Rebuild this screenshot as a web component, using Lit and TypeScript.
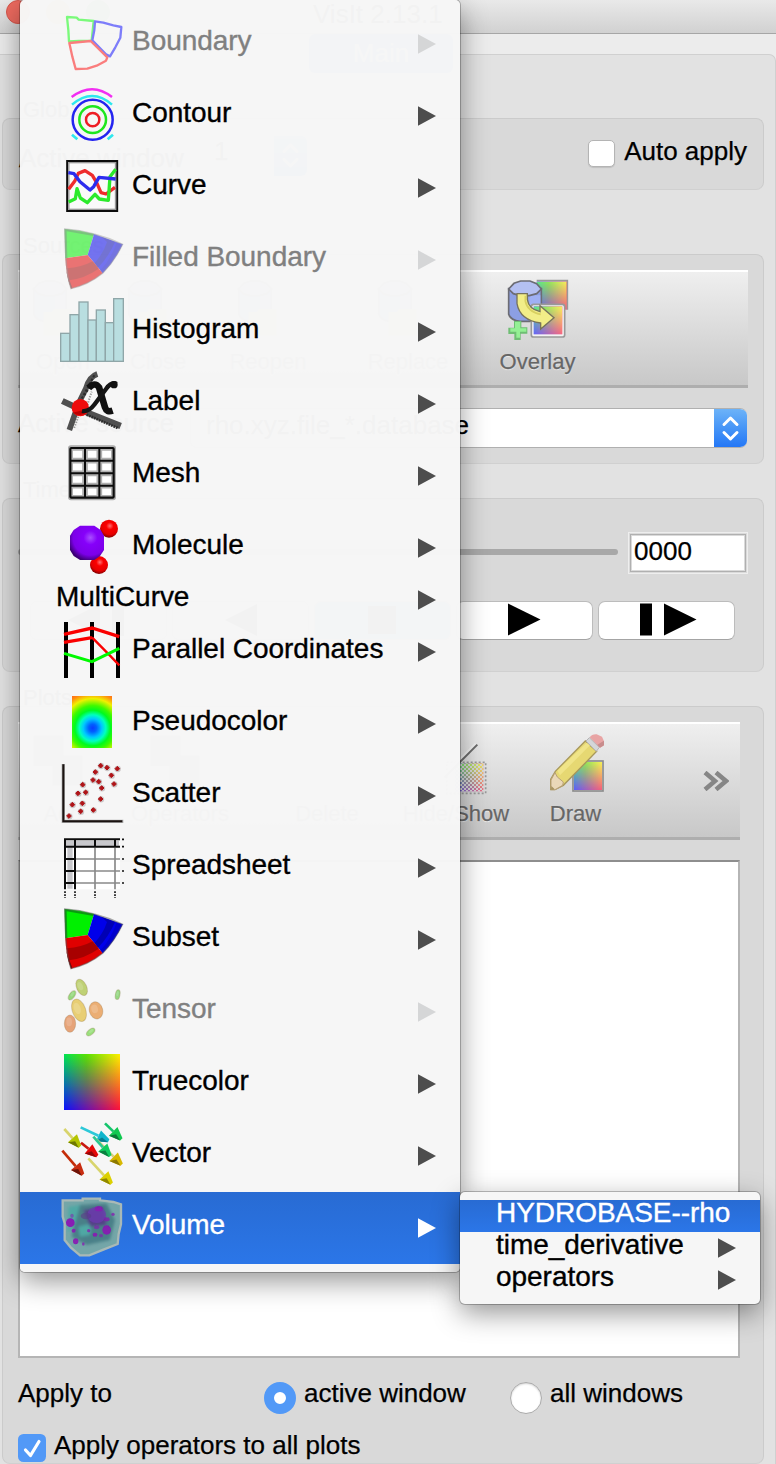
import { LitElement, html, svg, css } from "lit";
import { customElement } from "lit/decorators.js";
import { classMap } from "lit/directives/class-map.js";

/* ---------- shared icon parts ---------- */

const fourColor = (id: string, x: number, y: number, w: number, h: number) => svg`
  <defs>
    <linearGradient id=${id + "t"}><stop offset="0" stop-color="#00e650"/><stop offset=".4" stop-color="#58e400"/><stop offset="1" stop-color="#fff200"/></linearGradient>
    <linearGradient id=${id + "b"}><stop offset="0" stop-color="#0a10ff"/><stop offset="1" stop-color="#ff1038"/></linearGradient>
    <linearGradient id=${id + "v"} x1="0" y1="0" x2="0" y2="1"><stop offset="0" stop-color="#fff"/><stop offset="1" stop-color="#000"/></linearGradient>
    <mask id=${id + "m"}><rect x=${x} y=${y} width=${w} height=${h} fill="url(#${id}v)"/></mask>
  </defs>
  <rect x=${x} y=${y} width=${w} height=${h} fill="url(#${id}b)"/>
  <rect x=${x} y=${y} width=${w} height=${h} fill="url(#${id}t)" mask="url(#${id}m)"/>`;

const wedges = svg`
  <path d="M194 27L240 32L282 42L263 105L196 115Z" fill="#00f000"/>
  <path d="M194 27L282 42L280 48L200 34L202 114L196 115Z" fill="#0a9a10"/>
  <path d="M282 42L368 73Q345 122 308 160L263 105Z" fill="#0000ea"/>
  <path d="M305 51L345 66Q325 112 294 143L283 130Q310 100 321 66Z" fill="#0000b4"/>
  <path d="M350 68L368 73Q345 122 308 160L301 151Q332 118 350 68Z" fill="#0000cc"/>
  <path d="M196 115L263 105L308 160Q265 195 213 206Q198 165 196 115Z" fill="#e00000"/>
  <path d="M200 145Q245 142 278 124L296 146Q255 175 207 181Z" fill="#a80000"/>
  <path d="M198 150L208 180L217 204L213 206Q203 180 198 150Z" fill="#700000"/>
  <path d="M194 27Q240 30 282 42Q326 53 368 73Q345 122 308 160Q265 195 213 206Q196 160 194 27Z" fill="none" stroke="#555" stroke-opacity=".5" stroke-width="4"/>`;

const arrow = (x1: number, y1: number, x2: number, y2: number, shaft: string, head: string, dark: string) => {
  const l = Math.hypot(x2 - x1, y2 - y1);
  const ux = (x2 - x1) / l, uy = (y2 - y1) / l;
  const bx = x2 - ux * 34, by = y2 - uy * 34;
  return svg`<path d="M${x1} ${y1}L${bx} ${by}" stroke=${shaft} stroke-width="8"/>
    <path d="M${x2 + uy * 5} ${y2 - ux * 5}L${x2 - uy * 5} ${y2 + ux * 5}L${bx - uy * 18} ${by + ux * 18}L${bx + uy * 18} ${by - ux * 18}Z" fill=${head}/>
    <path d="M${x2 - uy * 5} ${y2 + ux * 5}L${bx - uy * 18} ${by + ux * 18}L${bx + ux * 12} ${by + uy * 12}Z" fill=${dark}/>`;
};

const scatterDots = [[302,257],[321,263],[352,266],[286,276],[334,286],[279,300],[296,305],[342,312],[305,324],[248,314],[257,337],[234,340],[302,357],[217,374],[247,370],[242,394],[280,390],[207,408]];

const bars = [[182,28,340],[210,27,284],[237,27,246],[264,25,300],[289,27,270],[316,25,308],[341,29,236]];

const ellipses: [number, number, number, number, number, string][] = [
  [245,262,15,26,-25,"#bfd175"],[216,286,8,16,35,"#96d87c"],[237,331,20,35,-20,"#e8ce74"],
  [288,331,20,26,-15,"#ebae74"],[210,371,17,26,0,"#e6a378"],[272,396,8,15,50,"#9adf7c"],[353,284,7,15,10,"#96d884"]];

const purple = [[290,315,28,24,0.8],[258,318,16,10,0.6],[211,338,13,13,0.95],[320,360,13,14,0.9],[221,362,6,6,0.8],[227,394,8,9,0.9],[285,374,7,6,0.9],[339,313,5,5,0.7],[266,362,5,5,0.7],[296,296,12,8,0.8],[320,328,9,6,0.7],[303,377,6,5,0.6],[250,402,4,5,0.7],[290,352,8,6,0.6],[216,317,5,6,0.5]];

const icons: Record<string, [number, unknown]> = {
  Boundary: [36, svg`<g fill="none" stroke-width="7" stroke-linejoin="round">
    <path d="M201 51L230 53L236 59L281 63L275 122L236 123L207 124L205 90Z" stroke="#7bfa7b"/>
    <path d="M285 64L310 68L340 76L364 81L361 113L346 142L330 169L318 163L277 121L283 90Z" stroke="#7d7dfa"/>
    <path d="M208 129L240 126L272 123L322 172L318 182L290 197L262 206L227 207L217 170Z" stroke="#fa7d7d"/></g>`],
  Contour: [252, svg`<g fill="none" stroke-width="7.5">
    <circle cx="278" cy="359" r="20" stroke="#ee1c24"/><circle cx="278" cy="359" r="40" stroke="#1ee61e"/><circle cx="278" cy="359" r="60" stroke="#2424f0"/>
    <path d="M216 314Q277 262 336 314" stroke="#2ee8ee"/><path d="M215 291Q277 244 336 291" stroke="#f22ef2"/>
    <path d="M216 404L232 418M339 404L323 418" stroke="#2ee8ee" stroke-width="8"/></g>`],
  Curve: [468, svg`<rect x="201.500" y="483" width="150" height="150" fill="#fafafa" stroke="#0c0c0c" stroke-width="6"/>
    <rect x="206.500" y="488" width="140" height="140" fill="none" stroke="#999" stroke-width="4"/>
    <g fill="none" stroke-width="10" stroke-linejoin="round">
    <path d="M206 568L225 542L235 520L255 512L277 526L290 548L303 578L318 582L345 562" stroke="#ee2c2c"/>
    <path d="M206 606L226 596L231 566L241 594L262 608L285 583L298 597L325 601L330 530L347 508" stroke="#2cea2c"/>
    <path d="M205 518L222 521L240 545L270 570L281 560L297 532L347 537" stroke="#2c2cee"/></g>`],
  "Filled Boundary": [24, svg`<g opacity=".53">${wedges}</g>`],
  Subset: [24, wedges],
  Histogram: [240, svg`<g fill="#b9dee0" stroke="#8fa6a8" stroke-width="4">${bars.map(b => svg`<rect x=${b[0]} y=${b[2]} width=${b[1]} height=${424 - b[2]}/>`)}</g>`],
  Label: [456, svg`<g fill="none">
    <path d="M292 462Q268 470 258 505L236 550L208 630" stroke="#505050" stroke-width="17"/>
    <path d="M283 466L232 560M270 500L250 530" stroke="#2c2c2c" stroke-width="6" stroke-dasharray="7 5"/>
    <path d="M187 543L262 578L362 618" stroke="#505050" stroke-width="19"/>
    <path d="M260 584L355 625" stroke="#2c2c2c" stroke-width="8" stroke-dasharray="5 3"/>
    <path d="M235 590L222 625M262 555L275 515" stroke="#999" stroke-width="6" stroke-dasharray="4 4"/>
    <circle cx="241" cy="563" r="26" fill="#ee0c0c"/><path d="M218 578Q242 594 266 574L250 570Z" fill="#b00"/>
    <path d="M266 504Q284 484 297 502L315 562Q320 578 338 572" stroke="#111" stroke-width="20"/>
    <path d="M350 492Q334 484 318 507L284 553Q266 577 246 573" stroke="#151515" stroke-width="13"/>
    <circle cx="342" cy="494" r="11" fill="#111"/></g>`],
  Mesh: [42, svg`<rect x="209" y="51" width="134" height="155" rx="4" fill="#fff" stroke="#aaa" stroke-width="10"/>
    <path d="M255 55V204M298 55V204M212 92H340M212 130H340M212 167H340" stroke="#b0b0b0" stroke-width="17"/>
    <rect x="212" y="55" width="128" height="147" rx="3" fill="none" stroke="#b0b0b0" stroke-width="14"/>
    <path d="M255 55V204M298 55V204M212 92H340M212 130H340M212 167H340" stroke="#0c0c0c" stroke-width="6"/>
    <rect x="211" y="54" width="130" height="149" rx="3" fill="none" stroke="#0c0c0c" stroke-width="6.500"/>`],
  Molecule: [258, svg`<defs><radialGradient id="mp" cx=".6" cy=".35" r=".68"><stop offset="0" stop-color="#a850ff"/><stop offset=".3" stop-color="#8600fa"/><stop offset=".75" stop-color="#7c00e8"/><stop offset="1" stop-color="#3c0074"/></radialGradient>
    <radialGradient id="mr" cx=".55" cy=".35" r=".68"><stop offset="0" stop-color="#ff7070"/><stop offset=".3" stop-color="#fa0000"/><stop offset=".7" stop-color="#e60000"/><stop offset="1" stop-color="#700000"/></radialGradient></defs>
    <circle cx="327" cy="296" r="27" fill="url(#mr)"/><circle cx="297" cy="405" r="27" fill="url(#mr)"/>
    <path d="M240 287H283L302 300L312 317V360L300 378L283 390H240L221 378L210 360V317L221 300Z" fill="url(#mp)"/>`],
  "Parallel Coordinates": [570, svg`<g fill="none" stroke="#000" stroke-width="12"><path d="M198 576V744M276 576V744M354 576V744"/>
    <path d="M192 613L276 594L358 620M192 637L276 623" stroke="#fa0000" stroke-width="10"/><path d="M276 622L330 677L358 706" stroke="#fa0000" stroke-width="7"/>
    <path d="M192 670L276 695L358 655" stroke="#00fa00" stroke-width="9"/></g>`],
  Pseudocolor: [36, svg`<defs><radialGradient id="pc" gradientUnits="userSpaceOnUse" cx="278" cy="144" r="116"><stop offset="0" stop-color="#0a3cff"/><stop offset=".1" stop-color="#0060ff"/><stop offset=".24" stop-color="#00c8ff"/><stop offset=".34" stop-color="#00ffc0"/><stop offset=".46" stop-color="#00fa20"/><stop offset=".58" stop-color="#40fa00"/><stop offset=".76" stop-color="#f0f000"/><stop offset=".9" stop-color="#ff8c10"/><stop offset="1" stop-color="#ff6420"/></radialGradient></defs>
    <rect x="216" y="48" width="120" height="156" fill="url(#pc)"/>`],
  Scatter: [252, svg`<path d="M190 252V424H370" fill="none" stroke="#aaa" stroke-width="10"/><path d="M190 253V424H367" fill="none" stroke="#1a1210" stroke-width="6"/>
    ${scatterDots.map(d => svg`<circle cx=${d[0] + 1} cy=${d[1] + 1} r="9.5" fill="#b0a8a8" opacity=".6"/><path d="M${d[0]} ${d[1] - 7}L${d[0] + 7} ${d[1]}L${d[0]} ${d[1] + 7}L${d[0] - 7} ${d[1]}Z" fill="#b01418" stroke="#b01418" stroke-width="3"/>`)}`],
  Spreadsheet: [468, svg`<rect x="195" y="478" width="165" height="150" fill="#fff"/><path d="M198 490H357M210 500V626" stroke="#c8c8cc" stroke-width="16"/>
    <path d="M285 503V628M345 503V628M228 537H360M228 573H360M228 609H360" stroke="#8a8a8a" stroke-width="5"/>
    <path d="M192 478H360M192 500H360M195 476V628M225 476V628M285 478V500M345 478V500M195 537H225M195 573H225M195 609H225" stroke="#0c0c0c" stroke-width="6"/>
    <path d="M366 478H372M366 500H372M366 537H372M366 573H372M366 609H372" stroke="#111" stroke-width="5"/>
    <path d="M195 634V654M225 634V654M285 634V654M345 634V654" stroke="#111" stroke-width="5" stroke-dasharray="5 4"/>`],
  Tensor: [240, svg`${ellipses.map(e => svg`<g transform="rotate(${e[4]} ${e[0]} ${e[1]})"><ellipse cx=${e[0]} cy=${e[1]} rx=${e[2]} ry=${e[3]} fill=${e[5]} stroke="#806030" stroke-opacity=".25" stroke-width="3"/><ellipse cx=${e[0] - e[2] * 0.15} cy=${e[1] - e[3] * 0.2} rx=${e[2] * 0.5} ry=${e[3] * 0.5} fill="#fff" opacity=".16"/></g>`)}`],
  Truecolor: [456, fourColor("tc", 192, 462, 168, 168)],
  Vector: [42, svg`${arrow(193,57,240,110,"#d8d46c","#b4c400","#6e7800")}${arrow(242,52,326,92,"#2cc8d8","#10b4cc","#087c90")}${arrow(315,40,364,88,"#14c46c","#10c850","#0a7838")}${arrow(289,88,365,164,"#d8d080","#d8b800","#8c7800")}${arrow(280,80,331,138,"#2cc890","#10cc60","#0a8040")}${arrow(243,98,292,138,"#c81810","#e40808","#900808")}${arrow(187,122,249,194,"#c42c08","#c82c10","#6c1408")}${arrow(265,145,335,221,"#d8d46c","#dcd000","#908800")}`],
  Volume: [258, svg`<defs><filter id="vb" x="-20%" y="-20%" width="140%" height="140%"><feGaussianBlur stdDeviation="5"/></filter><filter id="vs" x="-20%" y="-20%" width="140%" height="140%"><feGaussianBlur stdDeviation="1.8"/></filter></defs>
    <path d="M188 271L248 271V266H300V271L340 276L363 283L363 342L356 372L353 402L312 418L268 436H240L212 412L194 390V340L188 320Z" fill="#74a6a8" stroke="#a9b9b6" stroke-width="7"/>
    <g filter="url(#vb)"><path d="M235 285L320 280L345 330L330 390L260 405L215 380L225 330Z" fill="#4a8088"/><path d="M205 290L240 285L225 340L204 370ZM235 350L275 340L270 375L240 380Z" fill="#4fa8a4"/><path d="M250 300L310 290L320 345L270 350Z" fill="#544088"/></g>
    <g filter="url(#vs)">${purple.map((p, i) => svg`<ellipse cx=${p[0]} cy=${p[1]} rx=${p[2]} ry=${p[3]} opacity=${p[4]} fill=${i === 0 ? "#6a3cae" : i === 1 ? "#5a3a88" : "#8a14b4"}/>`)}</g>`],
};

const cylinder = svg`<path d="M206 145V222Q212 240 240 243H270Q300 238 304 222V145Z" fill="#8c9fe4" stroke="#6c6c74" stroke-width="5"/>
  <path d="M268 165H301V222Q292 240 268 240Z" fill="#9fb0f4"/>
  <path d="M206 146L222 129L242 122H270L290 130L304 146L290 160L268 166H240L220 160Z" fill="#b4c0f2" stroke="#6c6c74" stroke-width="5"/>`;

const overlayIcon = svg`<g><path d="M290 121H382V208" fill="none" stroke="#999" stroke-width="5"/>
  <g opacity=".62">${fourColor("ov1", 290, 124, 90, 84)}</g>
  ${cylinder}
  <rect x="274" y="192" width="100" height="98" rx="7" fill="#f3f3f3" stroke="#999" stroke-width="5"/>
  <g opacity=".62">${fourColor("ov2", 281, 198, 86, 84)}</g>
  <path d="M231 160H262V178Q266 206 300 214V196L342 232L302 266V248Q240 240 231 190Z" fill="#f2ee88" stroke="#77735c" stroke-width="4"/>
  <path d="M256 166V182Q262 214 302 222" fill="none" stroke="#d8d060" stroke-width="5"/>
  <path d="M222 242H244V261H262V280H242V299H223V281H205V262H222Z" fill="#6fbe74"/><path d="M225 245H241V264H259V274H240V292H229V274H211V264H225Z" fill="#94f094"/></g>`;

const drawIcon = svg`<rect x="399" y="207" width="90" height="90" fill="#eee" stroke="#8c8c8c" stroke-width="5"/>
  <g opacity=".64">${fourColor("dr", 402, 210, 84, 84)}</g>
  <path d="M332 262L346 238L436 147L470 178L370 280L345 293H332Z" fill="#e6d872" stroke="#a8985c" stroke-width="4"/>
  <path d="M352 236L440 152L450 160L360 250Z" fill="#f0e488"/>
  <path d="M345 242L352 255L370 270L368 280L345 293H333V264Z" fill="#ead8b8" stroke="#b8a078" stroke-width="3"/>
  <path d="M334 282L343 290L341 293H333Z" fill="#a89460"/>
  <path d="M438 147L448 137L478 166L469 178Z" fill="#d4d6d8" stroke="#b4b4b4" stroke-width="3"/>
  <path d="M449 136Q456 126 470 127L486 134L492 148V160L480 167Z" fill="#e8a4a4"/><path d="M492 146V160L480 167L472 158Z" fill="#c88c8c"/>`;

const showIcon = svg`<defs><pattern id="dith" width="12" height="12" patternUnits="userSpaceOnUse"><rect width="6" height="6" fill="#d8d8d8"/><rect x="6" y="6" width="6" height="6" fill="#d8d8d8"/></pattern></defs>
  <rect x="20" y="211" width="117" height="93" fill="none" stroke="#999" stroke-width="5" stroke-dasharray="6 6"/>
  <g opacity=".55">${fourColor("hs", 46, 214, 84, 84)}</g><rect x="24" y="214" width="108" height="84" fill="url(#dith)"/>
  <path d="M10 252L107 155" stroke="#f2f2f2" stroke-width="7"/><path d="M14 256L112 158" stroke="#6c6c6c" stroke-width="6"/>`;

const folderIcon = svg`${cylinder}<path d="M235 215H260L268 206H320V285H235Z" fill="#e8d888"/>`;
const blockIcon = svg`<rect x="206" y="130" width="90" height="90" fill="#777"/><rect x="262" y="190" width="90" height="90" fill="#999"/>`;

const tool = (label: string, cls: string, box: string, art: unknown) => html`
  <div class="tool ${cls}"><svg class="tool-icon" viewBox=${box}>${art}</svg><span>${label}</span></div>`;

const names: [string, boolean][] = [["Boundary", true], ["Contour", false], ["Curve", false], ["Filled Boundary", true], ["Histogram", false], ["Label", false], ["Mesh", false], ["Molecule", false], ["MultiCurve", false], ["Parallel Coordinates", false], ["Pseudocolor", false], ["Scatter", false], ["Spreadsheet", false], ["Subset", false], ["Tensor", true], ["Truecolor", false], ["Vector", false], ["Volume", false]];

const pointer = html`<svg class="pointer" viewBox="0 0 18 20"><path d="M0 .3L18 10L0 19.700Z" fill="currentColor"/></svg>`;

const menuBase = css`
  .row { box-sizing: border-box; display: flex; align-items: center; height: 72px; padding: 0 24px 0 40px; color: #000; }
  .row.plain { height: 32px; padding-left: 36px; }
  .row.off { color: #808080; }
  .row.off .pointer { color: #d5d6d7; }
  .row.on, .row.on .pointer { color: #fff; }
  .row.on { background: linear-gradient(#286bd3, #2b76e8); }
  .name { font-size: 28px; line-height: 24px; padding-bottom: 6px; white-space: nowrap; letter-spacing: -0.04px; -webkit-text-stroke: 0.35px currentColor; }
  .icon { width: 64px; height: 64px; margin-right: 8px; overflow: visible; flex: none; }
  .pointer { width: 18px; height: 20px; margin-left: auto; color: #4d4d4d; flex: none; }
`;

@customElement("plot-menu")
class PlotMenu extends LitElement {
  static styles = [menuBase, css`
    :host { display: block; box-sizing: border-box; width: 440px; height: 1272px; padding: 8px 0; border-radius: 5px;
      background: rgba(246, 246, 246, .984); box-shadow: 0 0 0 1px rgba(0,0,0,.24), 0 9px 28px rgba(0,0,0,.42); }
  `];
  render() {
    return names.map(([n, off]) => html`
      <div class=${classMap({ row: true, off, on: n === "Volume", plain: !icons[n] })}>
        ${icons[n] ? html`<svg class="icon" viewBox="180 ${icons[n][0]} 192 192">${icons[n][1]}</svg>` : ""}
        <span class="name">${n}</span>${pointer}
      </div>`);
  }
}

@customElement("variable-menu")
class VariableMenu extends LitElement {
  static styles = [menuBase, css`
    :host { display: block; box-sizing: border-box; width: 300px; height: 112px; padding: 8px 0; border-radius: 5px;
      background: #f6f6f6; box-shadow: 0 0 0 1px rgba(0,0,0,.24), 0 9px 28px rgba(0,0,0,.42); }
  `];
  render() {
    return html`<div class="row plain on"><span class="name">HYDROBASE--rho</span></div>
      <div class="row plain"><span class="name">time_derivative</span>${pointer}</div>
      <div class="row plain"><span class="name">operators</span>${pointer}</div>`;
  }
}

@customElement("app-root")
class AppRoot extends LitElement {
  static styles = css`
    :host { display: block; position: relative; width: 776px; height: 1464px; overflow: hidden; background: #ececec;
      font-family: "Liberation Sans", Arial, sans-serif; font-size: 26px; line-height: 30px; color: #000; }
    * { box-sizing: border-box; }
    .title { display: flex; align-items: flex-start; height: 34px; padding-left: 6px; gap: 16px; background: linear-gradient(#e9e9e9, #d1d1d1); border-bottom: 1px solid #a6a6a6; }
    .light { width: 24px; height: 24px; border-radius: 50%; background: #ed6a5f; border: 1px solid #d5564c; }
    .light.y { background: #f5bf4f; border-color: #d9a33c; }
    .light.g { background: #61c554; border-color: #4ea73f; }
    .caption { margin-left: 187px; line-height: 28px; white-space: nowrap; }
    .tabs { display: flex; justify-content: center; height: 20px; padding-right: 14px; overflow: visible; }
    .tab { width: 144px; height: 39px; flex: none; border-radius: 6px; background: #4a90f0; color: #fff; text-align: center; line-height: 38px; z-index: 1; }
    .page { height: 1410px; padding: 37px 11px 0 2px; background: #e2e2e2; border: 1px solid #d0d0d0; border-left: 0; border-bottom: 0; border-radius: 0 7px 0 0; display: flex; flex-direction: column; -webkit-text-stroke: 0.25px currentColor; }
    .heading { height: 26px; padding-left: 21px; font-size: 22px; line-height: 36px; white-space: nowrap; }
    .group { flex: none; width: 762px; border: 1px solid #cbcbcb; border-bottom-color: #d0d0d0; border-radius: 8px; background: #d9d9d9; }
    .gap { height: 38px; flex: none; }
    .gap.small { height: 8px; }
    .global { height: 72px; display: flex; align-items: flex-start; padding: 17px 16px 0 16px; }
    .global .lab { width: 181px; padding-top: 7px; }
    .spin { width: 107px; height: 40px; padding-left: 14px; display: flex; justify-content: space-between; background: #fff; border-radius: 6px; overflow: hidden; }
    .step { width: 33px; height: 100%; flex: none; background: linear-gradient(#6db3f8, #4a98f7 45%, #2477f6); }
    .step svg { display: block; width: 33px; height: 38px; }
    .box { width: 27px; height: 27px; border-radius: 5px; background: #fff; border: 1px solid #b4b4b4; box-shadow: 0 1px 1px rgba(0,0,0,.12); flex: none; }
    .auto { margin: 0 0 0 auto; display: flex; gap: 9px; }
    .auto .box { margin-top: 4px; }
    .sources { height: 210px; padding: 15px 15px 0 15px; }
    .bar { display: flex; height: 118px; border-top: 2px solid #fff; border-bottom: 3px solid #aeaeae; background: linear-gradient(#efefef, #c8c8c8); }
    .tool { display: flex; flex-direction: column; align-items: center; padding-top: 7px; font-size: 22px; line-height: 26px; color: #666; text-shadow: 0 1px 1px #eee; white-space: nowrap; }
    .tool-icon { width: 64px; height: 64px; margin-bottom: 6px; flex: none; }
    .w90 { width: 90px; } .w99 { width: 99px; } .w100 { width: 100px; } .w108 { width: 108px; } .w120 { width: 120px; } .w131 { width: 131px; } .w144 { width: 144px; } .w150 { width: 150px; } .w160 { width: 160px; }
    .source { display: flex; align-items: flex-start; margin-top: 20px; }
    .source .lab { width: 172px; white-space: nowrap; }
    .combo { display: flex; width: 557px; height: 40px; justify-content: space-between; background: #fff; border: 1px solid #b0b0b0; border-right: 0; border-radius: 7px; overflow: hidden; padding-left: 15px; white-space: nowrap; line-height: 32px; }
    .time { height: 174px; padding: 34px 0 0 15px; }
    .slide { display: flex; align-items: center; height: 40px; }
    .groove { width: 600px; height: 6px; margin-top: -2px; border-radius: 3px; background: #a8a8a8; }
    .field { width: 118px; height: 40px; margin-left: 11px; padding-left: 2px; border: 3px solid #dadada; outline: 1px solid #b0b0b0; outline-offset: -2px; box-shadow: 0 0 0 1px #eee; background: #fff; line-height: 31px; }
    .buttons { display: flex; gap: 5px; padding: 28px 0 0 12px; }
    .btn { width: 137px; height: 39px; border: 1px solid #bcbcbc; border-bottom-color: #a4a4a4; border-radius: 7px; background: #fff; display: flex; flex: none; }
    .btn.stop { background: #5a9cf2; }
    .btn svg { width: 135px; height: 37px; }
    .plots { height: 758px; padding: 15px; }
    .plots .bar { width: 722px; padding-right: 11px; }
    .more { width: 26px; height: 20px; margin: 47px 0 0 auto; }
    .list { width: 722px; height: 498px; margin-top: 20px; background: #fff; border: 2px solid #b5b5b5; border-top-color: #8e8e8e; }
    .apply { display: flex; align-items: flex-start; padding-top: 20px; height: 72px; }
    .apply .lab { width: 246px; }
    .radio { width: 32px; height: 32px; margin: 4px 8px 0 0; border-radius: 50%; background: #fff; border: 1px solid #aaa; box-shadow: inset 0 1px 2px rgba(0,0,0,.18); flex: none; }
    .radio.sel { border: 10.500px solid #5299f7; box-shadow: none; }
    .aw { width: 206px; }
    .all { display: flex; gap: 8px; }
    .tick { width: 28px; height: 28px; margin-top: 4px; flex: none; }
    .plot-menu { position: absolute; left: 20px; top: 0; z-index: 2; }
    .var-menu { position: absolute; left: 460px; top: 1192px; z-index: 3; }
  `;

  render() {
    const chev = svg`<path d="M10 15.500L16.500 9L23 15.500M10 23.500L16.500 30L23 23.500" fill="none" stroke="#fff" stroke-width="3" stroke-linecap="round" stroke-linejoin="round"/>`;
    const btn = (art: unknown, cls = "") => html`<div class="btn ${cls}"><svg viewBox="1 1 135 37">${art}</svg></div>`;
    return html`
      <div class="title"><i class="light"></i><i class="light y"></i><i class="light g"></i><span class="caption">VisIt 2.13.1</span></div>
      <div class="tabs"><div class="tab">Main</div></div>
      <div class="page">
        <div class="heading">Global</div>
        <div class="group global">
          <span class="lab">Active window</span>
          <div class="spin"><span>1</span><div class="step"><svg viewBox="0 0 33 38">${chev}</svg></div></div>
          <div class="auto"><i class="box"></i><span>Auto apply</span></div>
        </div>
        <div class="gap"></div>
        <div class="heading">Sources</div>
        <div class="group sources">
          <div class="bar">
            ${tool("Open", "w90", "198 116 192 192", folderIcon)}
            ${tool("Close", "w100", "198 116 192 192", folderIcon)}
            ${tool("Reopen", "w120", "198 116 192 192", folderIcon)}
            ${tool("Replace", "w160", "198 116 192 192", folderIcon)}
            ${tool("Overlay", "w99", "198 116 192 192", overlayIcon)}
          </div>
          <div class="source"><span class="lab">Active source</span>
            <div class="combo"><span>rho.xyz.file_*.database</span><div class="step"><svg viewBox="0 0 33 38">${chev}</svg></div></div></div>
        </div>
        <div class="gap small"></div>
        <div class="heading">Time</div>
        <div class="group time">
          <div class="slide"><div class="groove"></div><div class="field">0000</div></div>
          <div class="buttons">
            ${btn(svg`<path d="M70 3V35L38 19ZM82 3H94V35H82Z"/>`)}
            ${btn(svg`<path d="M85 3V35L53 19Z"/>`)}
            ${btn(svg`<path d="M54 5H82V33H54Z"/>`, "stop")}
            ${btn(svg`<path d="M52 2.500L84.500 18.500L52 34.500Z"/>`)}
            ${btn(svg`<path d="M42 2.500H54V34.500H42ZM66 2.500L98.500 18.500L66 34.500Z"/>`)}
          </div>
        </div>
        <div class="gap small"></div>
        <div class="heading">Plots</div>
        <div class="group plots">
          <div class="bar">
            ${tool("Add", "w90", "198 116 192 192", blockIcon)}
            ${tool("Operators", "w144", "198 116 192 192", blockIcon)}
            ${tool("Delete", "w150", "198 116 192 192", "")}
            ${tool("Hide/Show", "w108", "-48 117 192 192", showIcon)}
            ${tool("Draw", "w131", "312 117 192 192", drawIcon)}
            <svg class="more" viewBox="0 0 26 20"><path d="M2 1.500L12 10L2 18.500M13 1.500L23 10L13 18.500" fill="none" stroke="#868686" stroke-width="4.500"/></svg>
          </div>
          <div class="list"></div>
          <div class="apply"><span class="lab">Apply to</span><i class="radio sel"></i><span class="aw">active window</span><i class="radio"></i><span>all windows</span></div>
          <div class="all"><svg class="tick" viewBox="0 0 28 28"><rect width="28" height="28" rx="5.500" fill="#5299f7"/><path d="M7.500 16L12.500 21.500L21 7.500" fill="none" stroke="#fff" stroke-width="3.200" stroke-linecap="round" stroke-linejoin="round"/></svg><span>Apply operators to all plots</span></div>
        </div>
      </div>
      <plot-menu class="plot-menu"></plot-menu>
      <variable-menu class="var-menu"></variable-menu>`;
  }
}
